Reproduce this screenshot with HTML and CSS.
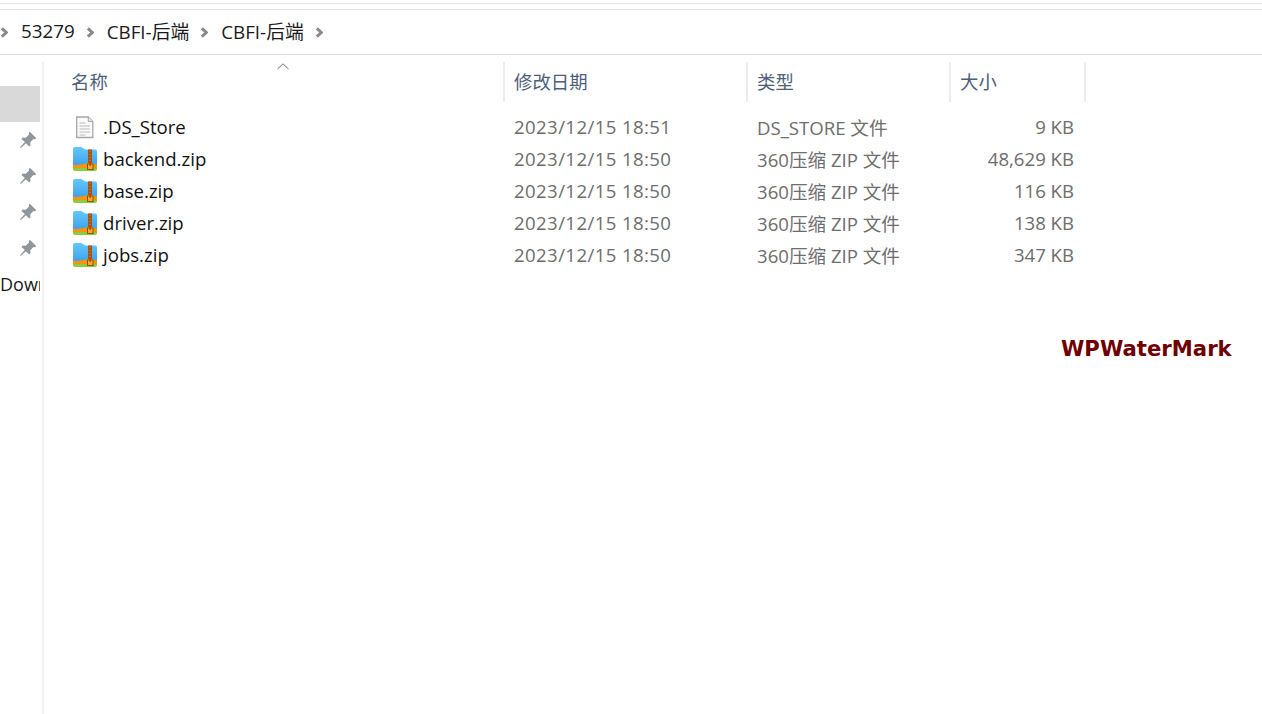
FILE: index.html
```html
<!DOCTYPE html>
<html lang="zh">
<head>
<meta charset="utf-8">
<title>CBFI-后端</title>
<link rel="stylesheet" href="styles.css">
</head>
<body>
<svg class="defs" width="0" height="0" aria-hidden="true">
  <symbol id="chev" viewBox="0 0 8 10">
    <path d="M1.800 .8 6.300 5 1.800 9.200" fill="none" stroke="#8a8a8a" stroke-width="3"/>
  </symbol>
  <symbol id="pin" viewBox="0 0 16 16">
    <path d="M9.6 .6 15.400 6.400 14 7.400 12.800 7 10 10 10.200 12.600 9 13.800 6.200 10.800 1.600 15 1 14.400 5.200 9.800 2.200 7 3.400 5.800 6 6 9 3.200 8.600 1.800Z" fill="#8f9599"/>
  </symbol>
  <symbol id="zip" viewBox="0 0 24 24">
    <defs>
      <linearGradient id="blue" x1="0" y1="0" x2="0" y2="1">
        <stop offset="0" stop-color="#62c8fc"/>
        <stop offset="1" stop-color="#3f9fee"/>
      </linearGradient>
    </defs>
    <path d="M0 2a2 2 0 0 1 2-2h6.500l3.500 2.500h10a2 2 0 0 1 2 2V19H0Z" fill="url(#blue)"/>
    <path d="M0 18c5 0 10-.6 14-2h6c1.300.8 2.700 1.500 4 2v3H0Z" fill="#f9930f"/>
    <path d="M0 21h24v1a2 2 0 0 1-2 2H2a2 2 0 0 1-2-2Z" fill="#8ccb3c"/>
    <path d="M15 2.500h4V16h-4Z" fill="#a9540f"/>
    <path d="M16.500 4h1v1h-1zM16.500 7h1v1h-1zM16.500 10h1v1h-1zM16.500 13h1v1h-1z" fill="#d98c3a"/>
    <rect x="14.500" y="17" width="5.500" height="5.500" fill="#f7a92a" stroke="#8a5212" stroke-width="1"/>
    <rect x="16.600" y="14.500" width="1.300" height="4.500" fill="#8a5212"/>
  </symbol>
  <symbol id="doc" viewBox="0 0 24 24">
    <path d="M3.700 2h11.600l4.500 4.500v16H3.700Z" fill="#fbfbfb" stroke="#a6a6a6" stroke-width="1.300"/>
    <path d="M15.300 2v4.500h4.500" fill="#e9e9e9" stroke="#a6a6a6"/>
    <path d="M6.500 8h6M6.500 11h10.500M6.500 14h10.500M6.500 17h10.500M6.500 20h6" stroke="#cfcfcf" stroke-width="1.500"/>
  </symbol>
</svg>

<header class="topbar">
  <div class="toolbar-edge"></div>
  <nav class="crumbs">
    <svg class="chev"><use href="#chev"/></svg><span class="crumb">53279</span>
    <svg class="chev"><use href="#chev"/></svg><span class="crumb">CBFI-后端</span>
    <svg class="chev"><use href="#chev"/></svg><span class="crumb">CBFI-后端</span>
    <svg class="chev"><use href="#chev"/></svg>
  </nav>
</header>

<main class="explorer">
  <aside class="side">
    <div class="side-item selected"></div>
    <div class="side-item"><svg class="pin"><use href="#pin"/></svg></div>
    <div class="side-item"><svg class="pin"><use href="#pin"/></svg></div>
    <div class="side-item"><svg class="pin"><use href="#pin"/></svg></div>
    <div class="side-item"><svg class="pin"><use href="#pin"/></svg></div>
    <div class="side-item side-text">Downloads</div>
  </aside>

  <section class="list">
    <div class="head">
      <div class="th th-name">名称<svg class="sort" viewBox="0 0 12 7"><path d="M.5 6 6 .8 11.500 6" fill="none" stroke="#6d6d6d"/></svg></div>
      <div class="th">修改日期</div>
      <div class="th">类型</div>
      <div class="th">大小</div>
    </div>
    <div class="rows">
      <div class="row">
        <div class="name"><svg class="icon"><use href="#doc"/></svg><span class="label">.DS_Store</span></div>
        <div class="cell date">2023/12/15 18:51</div>
        <div class="cell">DS_STORE 文件</div>
        <div class="cell size">9 KB</div>
      </div>
      <div class="row">
        <div class="name"><svg class="icon"><use href="#zip"/></svg><span class="label">backend.zip</span></div>
        <div class="cell date">2023/12/15 18:50</div>
        <div class="cell">360压缩 ZIP 文件</div>
        <div class="cell size">48,629 KB</div>
      </div>
      <div class="row">
        <div class="name"><svg class="icon"><use href="#zip"/></svg><span class="label">base.zip</span></div>
        <div class="cell date">2023/12/15 18:50</div>
        <div class="cell">360压缩 ZIP 文件</div>
        <div class="cell size">116 KB</div>
      </div>
      <div class="row">
        <div class="name"><svg class="icon"><use href="#zip"/></svg><span class="label">driver.zip</span></div>
        <div class="cell date">2023/12/15 18:50</div>
        <div class="cell">360压缩 ZIP 文件</div>
        <div class="cell size">138 KB</div>
      </div>
      <div class="row">
        <div class="name"><svg class="icon"><use href="#zip"/></svg><span class="label">jobs.zip</span></div>
        <div class="cell date">2023/12/15 18:50</div>
        <div class="cell">360压缩 ZIP 文件</div>
        <div class="cell size">347 KB</div>
      </div>
    </div>
  </section>
</main>

<div class="watermark">WPWaterMark</div>
</body>
</html>
```

FILE: styles.css
```css
* { box-sizing: border-box; }

html, body {
  margin: 0;
  height: 100%;
  background: #fff;
  overflow: hidden;
}

body {
  font-family: "Open Sans", "Noto Sans CJK SC", sans-serif;
  font-size: 18.6px;
  color: #1a1a1a;
  display: flex;
  flex-direction: column;
  position: relative;
}

.defs { position: absolute; }

.topbar {
  height: 55px;
  flex: none;
  padding-top: 3px;
  border-bottom: 1px solid #d9d9d9;
}

.toolbar-edge {
  height: 7px;
  border-top: 1px solid #e2e2e2;
  border-bottom: 1px solid #e2e2e2;
}

.crumbs {
  display: flex;
  align-items: center;
  height: 44px;
  font-size: 18.8px;
}

.chev {
  width: 8px;
  height: 11px;
  flex: none;
}

.crumb { padding: 0 11px 2px 13px; white-space: nowrap; }

.explorer {
  flex: 1;
  display: flex;
  padding-top: 7px;
  min-height: 0;
}

.side {
  width: 44px;
  flex: none;
  padding-top: 24px;
  border-right: 2px solid #f2f2f2;
}

.side-item {
  width: 40px;
  height: 36px;
  display: flex;
  align-items: center;
  justify-content: flex-end;
  padding-right: 3px;
  overflow: hidden;
}

.selected { background: #d9d9d9; }

.pin { width: 18px; height: 18px; }

.side-text {
  justify-content: flex-start;
  padding: 0;
  white-space: nowrap;
  font-size: 18px;
}

.list {
  flex: 1;
  min-width: 0;
  color: #6d6d6d;
}

.head, .row {
  display: grid;
  grid-template-columns: 461px 243px 203px 135px;
}

.head {
  height: 40px;
  color: #4c607a;
  font-size: 18.4px;
}

.th {
  display: flex;
  align-items: center;
  padding: 0 0 2px 9px;
  border-right: 2px solid #ececec;
}

.th-name {
  padding-left: 27px;
  position: relative;
}

.sort {
  position: absolute;
  left: 233px;
  top: 1px;
  width: 12px;
  height: 7px;
}

.rows { padding-top: 9px; }

.row {
  height: 32px;
  align-items: center;
}

.name {
  display: flex;
  align-items: center;
  padding-left: 29px;
  color: #111;
}

.label { padding-bottom: 2px; }

.icon {
  width: 24px;
  height: 24px;
  margin-right: 6px;
  flex: none;
}

.cell {
  padding: 0 0 2px 9px;
  white-space: nowrap;
}

.date { letter-spacing: 0.4px; }

.size {
  text-align: right;
  padding-right: 12px;
}

.watermark {
  position: absolute;
  left: 1061px;
  top: 336px;
  font-family: "DejaVu Sans", sans-serif;
  font-weight: 700;
  font-size: 21.2px;
  color: #6f0000;
  white-space: nowrap;
}
```
